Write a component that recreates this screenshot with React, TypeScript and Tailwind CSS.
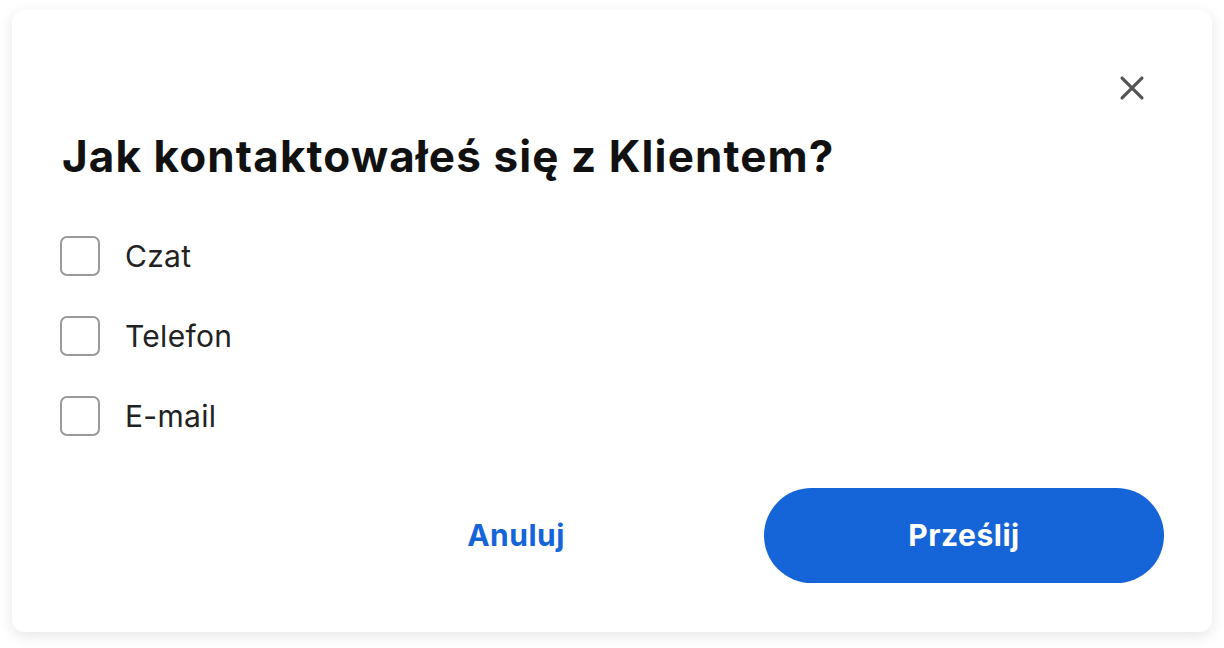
import { useState } from 'react';

const options = ['Czat', 'Telefon', 'E-mail'];

export default function App() {
  const [checked, setChecked] = useState<string[]>([]);

  const toggle = (name: string) => {
    setChecked(prev => (prev.includes(name) ? prev.filter(n => n !== name) : [...prev, name]));
  };

  return (
    <div className="min-h-screen bg-white px-[12px] pt-[10px] font-['Inter',sans-serif]">
      <div className="relative w-[1200px] h-[622px] rounded-[12px] bg-white shadow-[0_4px_14px_rgba(0,0,0,0.10)] px-[48px] pt-[120px]">
        {/* Close button */}
        <button className="absolute right-[64px] top-[62px] w-[32px] h-[32px] flex items-center justify-center text-[#555]">
          <svg width="28" height="28" viewBox="0 0 24 24" fill="none" stroke="currentColor" strokeWidth={2.8} strokeLinecap="round">
            <path d="M3.5 3.5l17 17M20.5 3.5l-17 17" />
          </svg>
        </button>

        <h1 className="text-[44px] leading-[52px] font-bold text-[#111] tracking-[1.1px] pl-[2px]">
          Jak kontaktowałeś się z Klientem?
        </h1>

        <div className="mt-[54px] flex flex-col gap-[40px]">
          {options.map(opt => (
            <label key={opt} className="flex items-center gap-[25px] cursor-pointer" onClick={() => toggle(opt)}>
              <span
                className={
                  checked.includes(opt)
                    ? 'w-[40px] h-[40px] rounded-[7px] border-2 border-[#1565d8] bg-[#1565d8]'
                    : 'w-[40px] h-[40px] rounded-[7px] border-2 border-[#9a9a9a] bg-white'
                }
              />
              <span className="text-[30px] leading-[40px] text-[#222] tracking-[0.3px]">{opt}</span>
            </label>
          ))}
        </div>

        <div className="mt-[52px] flex justify-end gap-[48px]">
          <button className="w-[400px] h-[95px] rounded-full text-[30px] font-bold text-[#1565d8] tracking-[0.5px]">
            Anuluj
          </button>
          <button className="w-[400px] h-[95px] rounded-full bg-[#1565d8] text-[30px] font-bold text-white tracking-[0.5px]">
            Prześlij
          </button>
        </div>
      </div>
    </div>
  );
}
